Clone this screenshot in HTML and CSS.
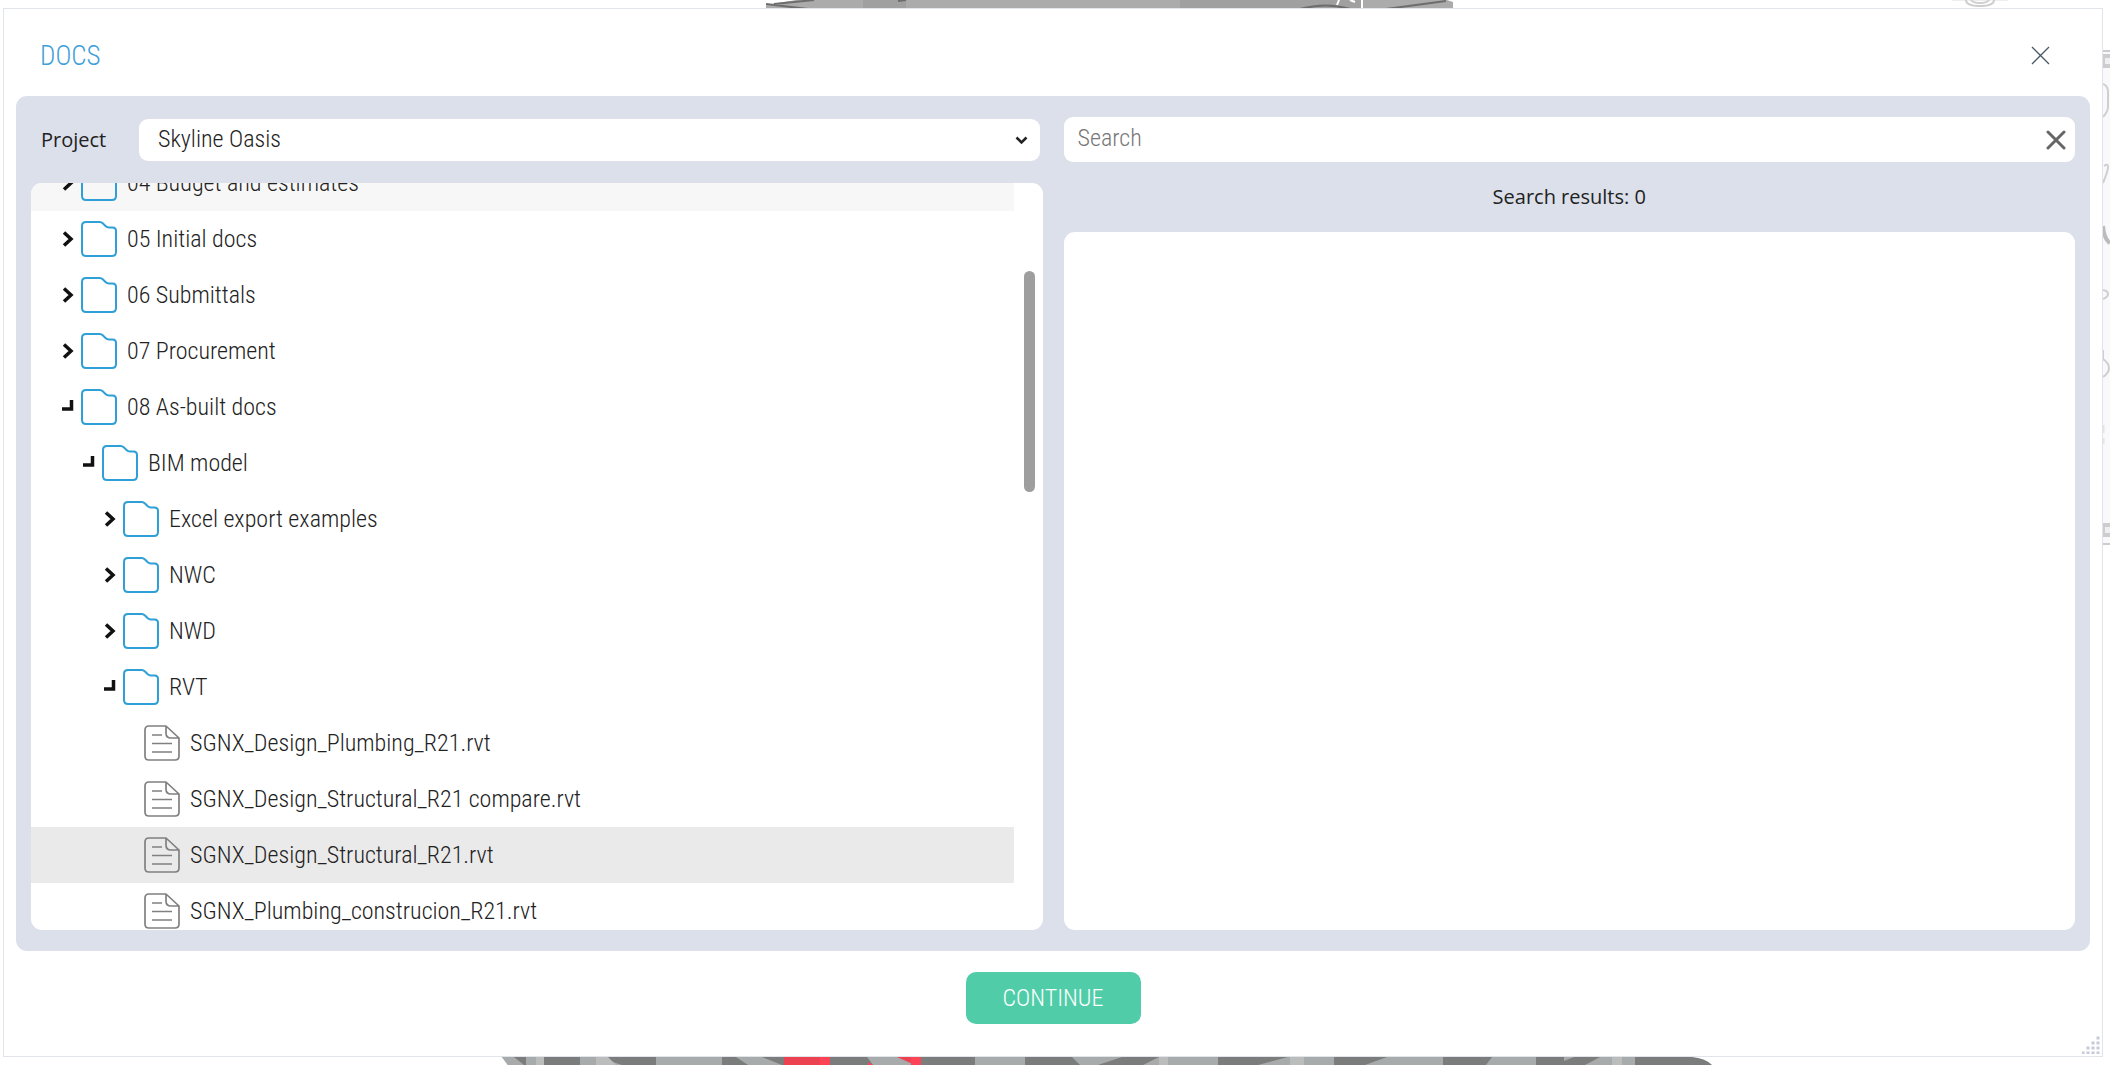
FILE: index.html
```
<!DOCTYPE html>
<html lang="en">

<head>
    <title>Docs</title>
    <meta charset="UTF-8">
    <meta name="viewport" content="width=device-width, initial-scale=1.0">

    <link rel="stylesheet" href="styles.css">
</head>

<body>
    <!-- Parts of the 3D view that show around the dialog -->
    <svg class="scene scene-top" width="690" height="9" aria-hidden="true">
        <path d="M0 9V5L30 0H681L687 2V9Z" fill="#ababab" />
        <path d="M97 0h43v9H97zM414 0h182v9H414z" fill="#a0a0a0" />
        <path d="M0 4l42 5M8 4L48 0M140 0l-8 1M534 9q26-7 50 0M620 9L680 1" fill="none" stroke="#6d6d6d" stroke-width="2" />
        <path d="M596 0v9M573 0l-2 5M584 0l5 2" fill="none" stroke="#fff" stroke-width="2" />
    </svg>
    <svg class="scene scene-compass" width="60" height="7" aria-hidden="true">
        <path d="M2 0h56" stroke="#ddd" />
        <path d="M16 0q0 6 14 6t14-6M21 0q2 3 9 3t9-3" fill="none" stroke="#cfcfcf" stroke-width="2" />
    </svg>
    <svg class="scene scene-bottom" width="1220" height="8" aria-hidden="true">
        <path d="M0 0H1190Q1203 1 1210 8H6Z" fill="#7b7c7c" />
        <path d="M0 0h12l10 8H6zM24 0h18v8H24zM78 0h18l24 8H78zM154 0h66v8H154zM234 0h26l20 8h-34zM365 0h34l20 8h-48zM473 0h50v8h-50zM570 0h50l-24 8h-18zM657 0h59v8h-75zM786 0h46v8h-76zM877 0h64v8h-78l22-8zM990 0h44v8h-50zM1062 0h10l-10 4zM1098 0h35v8h-50z" fill="#a8abab" />
        <path d="M34 0h8v8h-8zM94 0h12l8 8H94zM657 0h9v8h-9zM788 0h14v8h-14zM1110 0h10v8h-10z" fill="#bbbdbd" />
        <path d="M282 0h46v8h-46zM395 0h24v8h-6z" fill="#eb4151" />
        <path d="M318 0h10v8h-10zM409 0h10v8h-10zM366 5l5 3h-5z" fill="#ff4356" />
    </svg>
    <svg class="scene scene-side" width="7" height="495" aria-hidden="true">
        <path d="M0 0h7v495H0z" fill="#f9f9fb" />
        <path d="M0 1h7M0 494h7" stroke="#ccc" stroke-width="2" />
        <path d="M0 4h7v14H0zM0 473h7v14H0z" fill="#cdcdcf" />
        <path d="M2 8h5v6H2zM2 477h5v6H2z" fill="#efefef" />
        <path d="M0 34q5 2 5 8v14q0 6-5 11M1 116q4-3 4 1t-5 16M0 240q5 1 5 4t-5 5M0 300v9q6 4 6 9t-6 9" fill="none" stroke="#cfcfcf" stroke-width="2" />
        <path d="M0 176q1 13 7 17" fill="none" stroke="#bbb" stroke-width="4" />
        <path d="M0 375v8M0 388v6" stroke="#e4e4e4" stroke-width="3" />
    </svg>

    <!-- Icons -->
    <svg width="0" height="0" class="icon-defs" aria-hidden="true">
        <symbol id="folder" viewBox="0 0 36 36">
            <path d="M5 1H18.500C20 1 21 1.500 22 2.500L24.500 5Q26 6.500 28 6.500H31.500Q35 6.500 35 10V31Q35 35 31 35H5Q1 35 1 31V5Q1 1 5 1Z" fill="none" stroke="#2f9fd8" stroke-width="2" />
        </symbol>
        <symbol id="file" viewBox="0 0 36 36">
            <path d="M5 1H22L35 13V31Q35 35 31 35H5Q1 35 1 31V5Q1 1 5 1ZM22 1V8Q22 13 27 13H35M8 10H18M8 18.500H28M8 27H28" fill="none" stroke="#808080" stroke-width="1.700" stroke-linejoin="round" />
        </symbol>
        <symbol id="collapsed" viewBox="0 0 12 16">
            <path d="M2 1.500L9 8L2 14.500" fill="none" stroke="#111" stroke-width="3.500" />
        </symbol>
        <symbol id="expanded" viewBox="0 0 12 16">
            <path d="M9.500 1V10H0" fill="none" stroke="#111" stroke-width="3.500" />
        </symbol>
    </svg>

    <main class="dialog">
        <header class="dialog-header">
            <h1>DOCS</h1>
            <button type="button" class="icon-button close" aria-label="Close">
                <svg width="19" height="19" viewBox="0 0 19 19">
                    <path d="M1 1L18 18M18 1L1 18" stroke="#4a5866" stroke-width="1.300" />
                </svg>
            </button>
        </header>

        <div class="panel">
            <section class="column">
                <div class="project-row">
                    <label for="project">Project</label>
                    <div class="select-box">
                        <select id="project">
                            <option>Skyline Oasis</option>
                        </select>
                        <svg class="select-arrow" width="13" height="9" viewBox="0 0 13 9">
                            <path d="M1.500 1.500L6.500 6.500L11.500 1.500" fill="none" stroke="#222" stroke-width="2.500" />
                        </svg>
                    </div>
                </div>

                <div class="box tree">
                    <ul id="tree-list"></ul>
                    <div class="scrollbar">
                        <div class="thumb"></div>
                    </div>
                </div>
            </section>

            <section class="column">
                <div class="search-box">
                    <input id="search" type="text" placeholder="Search" aria-label="Search">
                    <button type="button" class="icon-button" aria-label="Clear search">
                        <svg width="20" height="20" viewBox="0 0 20 20">
                            <path d="M2 2L18 18M18 2L2 18" stroke="#666" stroke-width="3" stroke-linecap="round" />
                        </svg>
                    </button>
                </div>
                <p class="results-count">Search results: 0</p>
                <div class="box results"></div>
            </section>
        </div>

        <footer class="dialog-footer">
            <button type="button" class="continue">CONTINUE</button>
        </footer>

        <svg class="grip" width="18" height="18" viewBox="0 0 18 18" aria-hidden="true">
            <path d="M16 2h0M11 7h0M16 7h0M6 12h0M11 12h0M16 12h0M1 17h0M6 17h0M11 17h0M16 17h0" stroke="#c6cad8" stroke-width="3" stroke-linecap="square" />
        </svg>
    </main>

    <script type="text/javascript">
        const items = [
            { name: '04 Budget and estimates', level: 0, icon: 'collapsed', state: 'hovered' },
            { name: '05 Initial docs', level: 0, icon: 'collapsed' },
            { name: '06 Submittals', level: 0, icon: 'collapsed' },
            { name: '07 Procurement', level: 0, icon: 'collapsed' },
            { name: '08 As-built docs', level: 0, icon: 'expanded' },
            { name: 'BIM model', level: 1, icon: 'expanded' },
            { name: 'Excel export examples', level: 2, icon: 'collapsed' },
            { name: 'NWC', level: 2, icon: 'collapsed' },
            { name: 'NWD', level: 2, icon: 'collapsed' },
            { name: 'RVT', level: 2, icon: 'expanded' },
            { name: 'SGNX_Design_Plumbing_R21.rvt', level: 3 },
            { name: 'SGNX_Design_Structural_R21 compare.rvt', level: 3 },
            { name: 'SGNX_Design_Structural_R21.rvt', level: 3, state: 'selected' },
            { name: 'SGNX_Plumbing_construcion_R21.rvt', level: 3 }
        ];

        document.getElementById('tree-list').innerHTML = items.map(item => `
            <li class="row level-${item.level} ${item.state ?? ''}">
                ${item.icon
                    ? `<button type="button" class="toggle" aria-label="Toggle ${item.name}"><svg width="12" height="16"><use href="#${item.icon}" /></svg></button>`
                    : '<span class="toggle"></span>'}
                <svg class="row-icon" width="36" height="36"><use href="#${item.icon ? 'folder' : 'file'}" /></svg>
                <span>${item.name}</span>
            </li>
        `).join('');
    </script>
</body>

</html>
```
FILE: styles.css
```
* {
    box-sizing: border-box;
}

body {
    margin: 0;
    padding: 8px 7px 8px 3px;
    height: 100vh;
    overflow: hidden;
    background-color: #fff;
    color: #222;
    font-family: 'Roboto Condensed', Roboto, sans-serif;
    font-size: 24px;
    font-weight: 300;
}

h1,
p,
ul {
    margin: 0;
    padding: 0;
}

button,
input,
select {
    border: none;
    outline: none;
    background: none;
    margin: 0;
    padding: 0;
    color: inherit;
    font: inherit;
}

button {
    cursor: pointer;
}

.icon-defs,
.scene {
    position: absolute;
}

.scene-top {
    top: 0;
    left: 766px;
}

.scene-compass {
    top: 0;
    left: 1950px;
}

.scene-bottom {
    bottom: 0;
    left: 502px;
}

.scene-side {
    top: 50px;
    right: 0;
}

.dialog {
    position: relative;
    display: flex;
    flex-direction: column;
    height: 100%;
    border: 1px solid #e1e5e9;
    background-color: #fff;
}

.dialog-header {
    display: flex;
    align-items: center;
    justify-content: space-between;
    height: 87px;
    padding: 6px 48px 0 36px;
}

.dialog-header h1 {
    color: #3f9fd8;
    font-size: 27px;
    font-weight: 300;
}

.icon-button {
    display: flex;
    padding: 4px;
}

.panel {
    flex: 1;
    min-height: 0;
    display: grid;
    grid-template-columns: 1fr 1fr;
    gap: 21px;
    margin: 0 12px;
    padding: 21px 15px;
    border-radius: 11px;
    background-color: #dce0ea;
}

.column {
    display: flex;
    flex-direction: column;
    min-width: 0;
    min-height: 0;
}

.project-row {
    display: flex;
    align-items: center;
    height: 45px;
    margin-bottom: 21px;
    padding: 0 3px 0 10px;
}

.project-row label {
    width: 98px;
}

.project-row label,
.results-count {
    font-family: 'Open Sans', sans-serif;
    font-size: 20px;
    font-weight: 400;
}

.select-box {
    position: relative;
    flex: 1;
    height: 42px;
}

.select-box select {
    appearance: none;
    width: 100%;
    height: 100%;
    padding: 0 40px 2px 19px;
    border-radius: 9px;
    background-color: #fff;
}

.select-arrow {
    position: absolute;
    top: 17px;
    right: 12px;
    pointer-events: none;
}

.box {
    flex: 1;
    min-height: 0;
    border-radius: 11px;
    background-color: #fff;
}

.tree {
    display: flex;
    overflow: hidden;
}

/* The list is scrolled half a row down */
.tree ul {
    flex: 1;
    margin-top: -28px;
    list-style: none;
}

.row {
    display: flex;
    align-items: center;
    height: 56px;
    padding-left: 31px;
    white-space: nowrap;
}

.level-1 {
    padding-left: 52px;
}

.level-2 {
    padding-left: 73px;
}

.level-3 {
    padding-left: 94px;
}

.hovered {
    background-color: #f7f7f7;
}

.selected {
    background-color: #eaeaea;
}

.toggle {
    display: flex;
    width: 12px;
    margin-right: 7px;
}

.row-icon {
    margin-right: 10px;
}

.scrollbar {
    width: 29px;
    padding: 88px 8px 0 10px;
}

.thumb {
    height: 221px;
    border-radius: 6px;
    background-color: #9e9e9e;
}

.search-box {
    display: flex;
    align-items: center;
    height: 45px;
    padding: 0 5px 0 14px;
    border-radius: 9px;
    background-color: #fff;
}

.search-box input {
    flex: 1;
    min-width: 0;
    height: 100%;
    padding-bottom: 4px;
}

.search-box input::placeholder {
    color: #777;
}

.results-count {
    line-height: 70px;
    text-align: center;
}

.dialog-footer {
    display: flex;
    justify-content: center;
    padding: 21px 0 32px;
}

.continue {
    width: 175px;
    height: 52px;
    border-radius: 10px;
    background-color: #50cda8;
    color: #fff;
}

.grip {
    position: absolute;
    right: 2px;
    bottom: 2px;
}
```
